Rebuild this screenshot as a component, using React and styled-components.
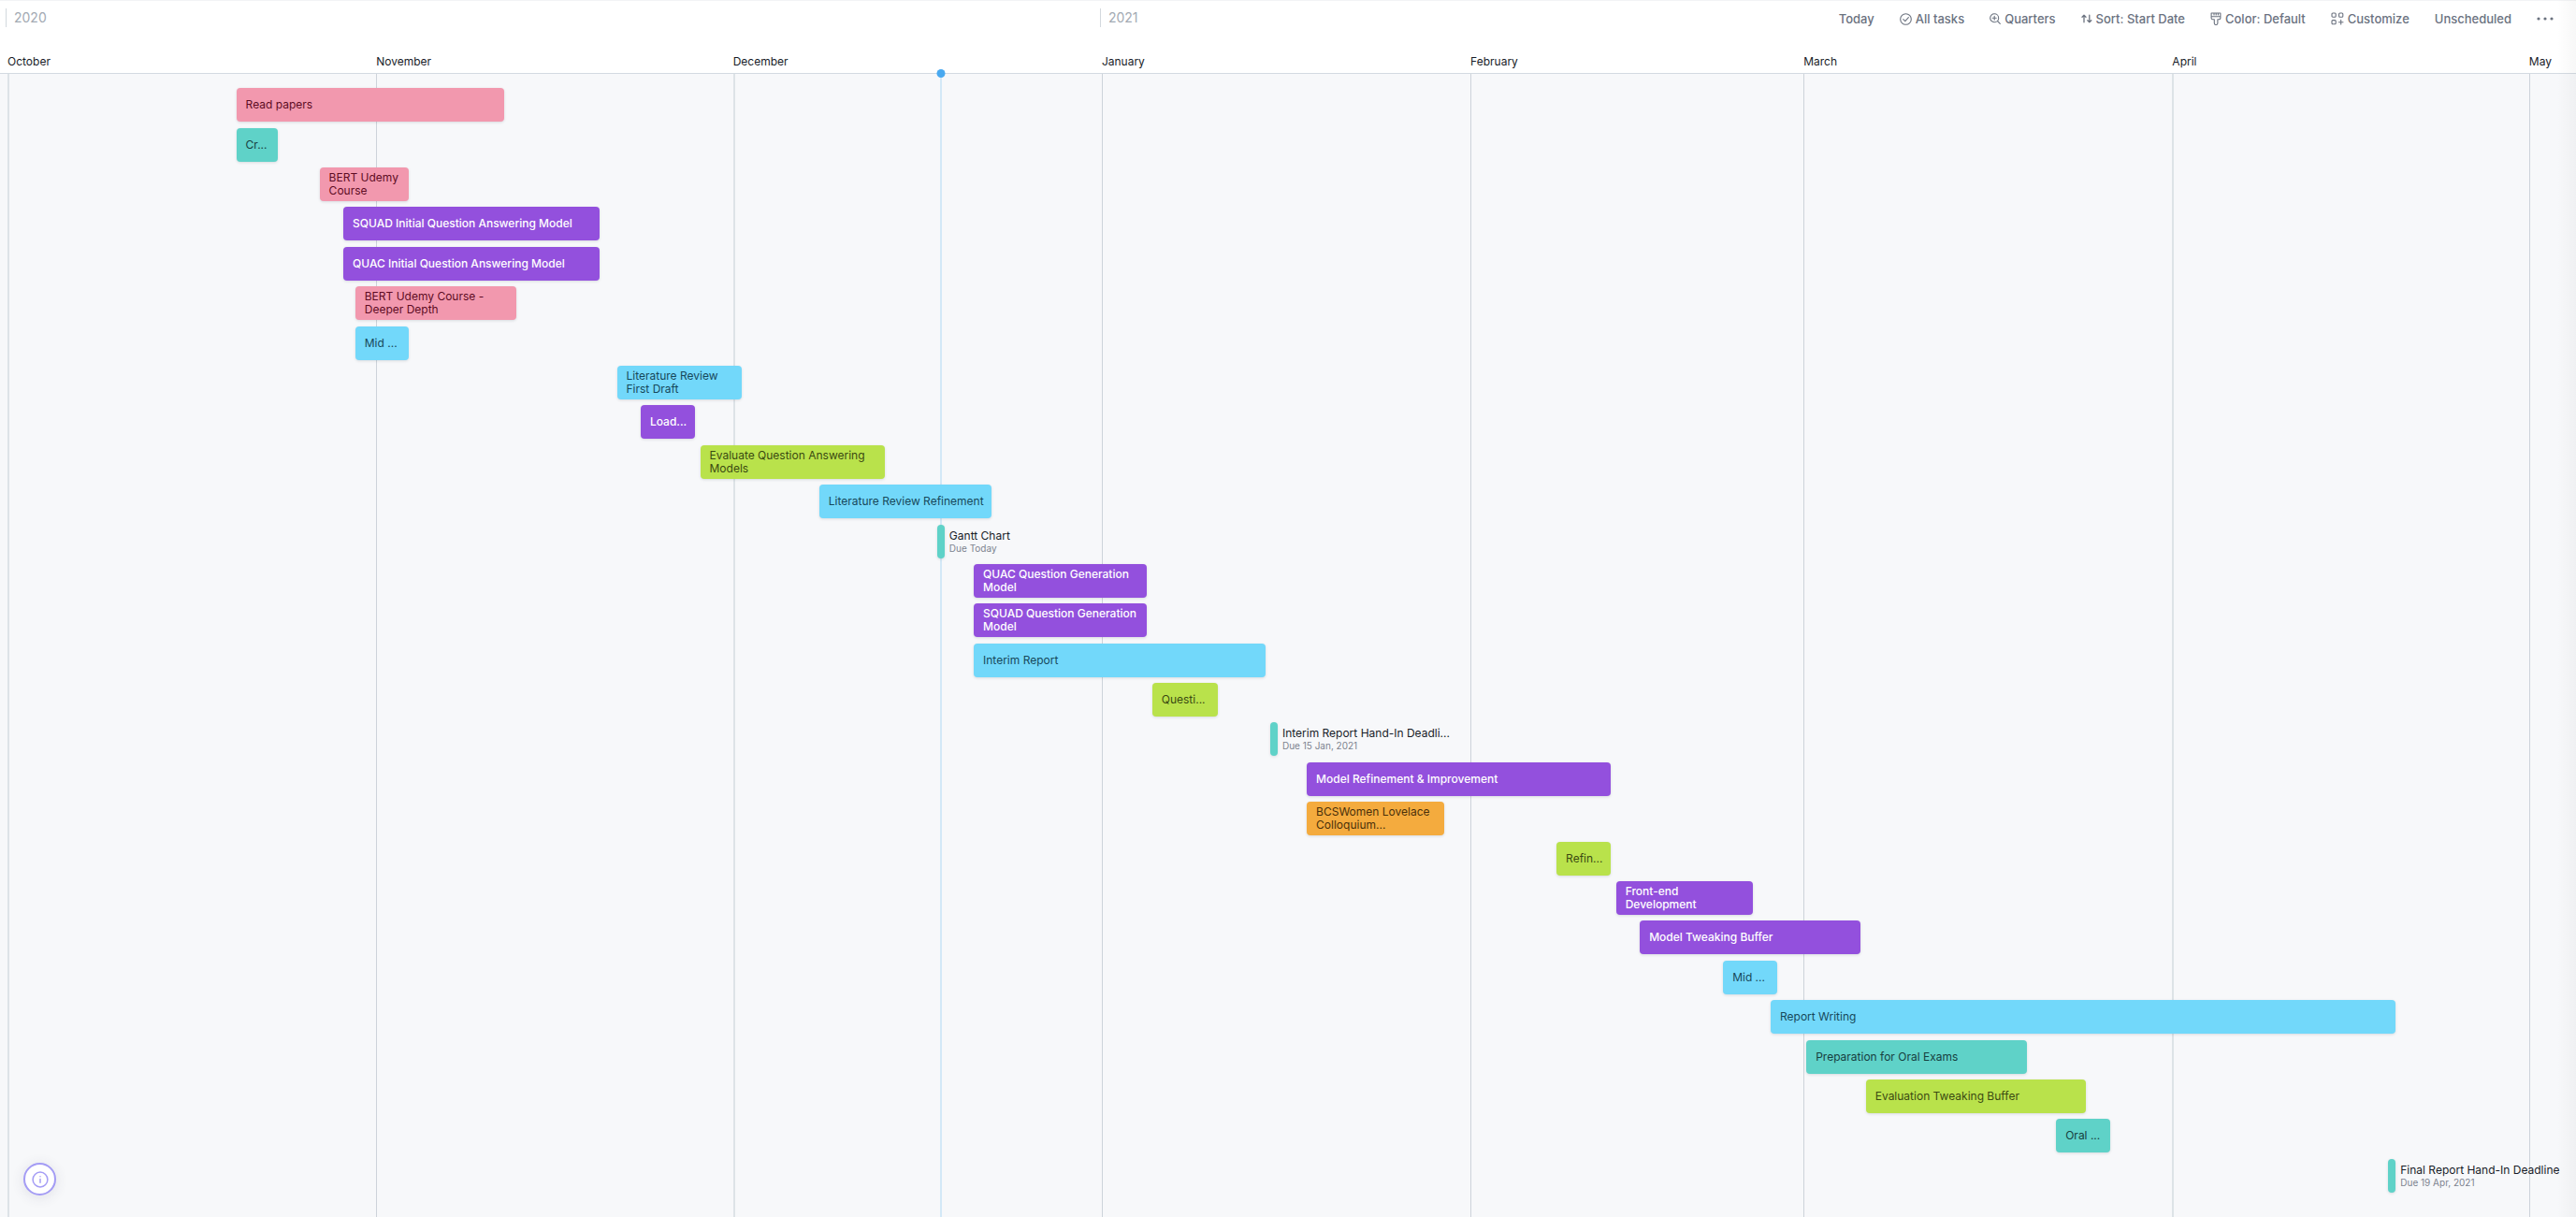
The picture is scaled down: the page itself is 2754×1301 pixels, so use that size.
import React from "react";
import styled, { createGlobalStyle, css } from "styled-components";

const GlobalStyle = createGlobalStyle`
  *, *::before, *::after { box-sizing: border-box; }
  body {
    margin: 0;
    background: #f7f8fa;
    color: #181c28;
    font-family: Inter, "Liberation Sans", sans-serif;
    font-size: 12px;
    line-height: 15px;
  }
`;

const DAYS = 215;

const palette = {
  pink: { fill: "#f298ae", text: "#5e0c24" },
  teal: { fill: "#5fd2c8", text: "#17403f" },
  purple: { fill: "#9350dd", text: "#ffffff", weight: 500 },
  blue: { fill: "#72d8fa", text: "#17485a" },
  green: { fill: "#b9e24b", text: "#3b4a12" },
  orange: { fill: "#f4ab3e", text: "#4a300a" },
};

const years = [
  { label: "2020", start: 0, end: 92 },
  { label: "2021", start: 92, end: 150 },
];

const months = [
  { label: "October", start: 0, end: 31, wide: true },
  { label: "November", start: 31, end: 61 },
  { label: "December", start: 61, end: 92, wide: true },
  { label: "January", start: 92, end: 123 },
  { label: "February", start: 123, end: 151 },
  { label: "March", start: 151, end: 182 },
  { label: "April", start: 182, end: 212, wide: true },
  { label: "May", start: 212, end: 215 },
];

const TODAY = 78;

const tasks = [
  { name: "Read papers", start: 19, end: 42, color: "pink" },
  { name: "Cr...", start: 19, end: 23, color: "teal" },
  { name: "BERT Udemy Course", start: 26, end: 34, color: "pink" },
  { name: "SQUAD Initial Question Answering Model", start: 28, end: 50, color: "purple" },
  { name: "QUAC Initial Question Answering Model", start: 28, end: 50, color: "purple" },
  { name: "BERT Udemy Course - Deeper Depth", start: 29, end: 43, color: "pink" },
  { name: "Mid ...", start: 29, end: 34, color: "blue" },
  { name: "Literature Review First Draft", start: 51, end: 62, color: "blue" },
  { name: "Load...", start: 53, end: 58, color: "purple" },
  { name: "Evaluate Question Answering Models", start: 58, end: 74, color: "green" },
  { name: "Literature Review Refinement", start: 68, end: 83, color: "blue" },
  { name: "Gantt Chart", start: 78, due: "Due Today" },
  { name: "QUAC Question Generation Model", start: 81, end: 96, color: "purple" },
  { name: "SQUAD Question Generation Model", start: 81, end: 96, color: "purple" },
  { name: "Interim Report", start: 81, end: 106, color: "blue" },
  { name: "Questi...", start: 96, end: 102, color: "green" },
  { name: "Interim Report Hand-In Deadli...", start: 106, due: "Due 15 Jan, 2021" },
  { name: "Model Refinement & Improvement", start: 109, end: 135, color: "purple" },
  { name: "BCSWomen Lovelace Colloquium...", start: 109, end: 121, color: "orange" },
  { name: "Refin...", start: 130, end: 135, color: "green" },
  { name: "Front-end Development", start: 135, end: 147, color: "purple" },
  { name: "Model Tweaking Buffer", start: 137, end: 156, color: "purple" },
  { name: "Mid ...", start: 144, end: 149, color: "blue" },
  { name: "Report Writing", start: 148, end: 201, color: "blue" },
  { name: "Preparation for Oral Exams", start: 151, end: 170, color: "teal" },
  { name: "Evaluation Tweaking Buffer", start: 156, end: 175, color: "green" },
  { name: "Oral ...", start: 172, end: 177, color: "teal" },
  { name: "Final Report Hand-In Deadline", start: 200, due: "Due 19 Apr, 2021" },
];

const Page = styled.div`
  position: relative;
  display: flex;
  flex-direction: column;
  min-height: 100vh;
  overflow: hidden;

  &::after {
    content: "";
    position: absolute;
    inset: 0 0 0 auto;
    width: 20px;
    background: linear-gradient(to left, rgba(0, 0, 0, 0.03), rgba(0, 0, 0, 0));
    pointer-events: none;
  }
`;

const dayColumns = css`
  display: grid;
  grid-template-columns: repeat(${DAYS}, minmax(0, 1fr));
  padding-left: 8px;
  padding-right: 12px;
`;

const Header = styled.header`
  display: flex;
  flex-direction: column;
  justify-content: space-between;
  height: 79px;
  background: #ffffff;
  border-top: 1px solid #f2f3f5;
  border-bottom: 1px solid #d3dae1;
`;

const TopRow = styled.div`
  display: grid;
`;

const YearScale = styled.div`
  ${dayColumns}
  grid-area: 1 / 1;
  padding-top: 8px;
`;

const Year = styled.div`
  grid-row: 1;
  grid-column: ${(p) => p.$start + 1} / ${(p) => p.$end + 1};
  margin-left: -2px;
  padding-left: 8px;
  border-left: 1px solid #d3d8de;
  color: #a3aab3;
  font-size: 14px;
  line-height: 20px;
  justify-self: start;
  align-self: start;
`;

const Toolbar = styled.nav`
  grid-area: 1 / 1;
  justify-self: end;
  display: flex;
  align-items: center;
  gap: 27px;
  padding-top: 8px;
  padding-right: 24px;
`;

const ToolButton = styled.button`
  display: flex;
  align-items: center;
  gap: 4px;
  height: 22px;
  padding: 0;
  border: 0;
  background: none;
  color: #6b727f;
  font: 500 13px/22px Inter, "Liberation Sans", sans-serif;
  white-space: nowrap;
  cursor: pointer;
`;

const Icon = styled.svg`
  flex: none;
  display: block;
  fill: none;
  stroke: currentColor;
  stroke-linecap: round;
  stroke-linejoin: round;
`;

const MonthScale = styled.div`
  ${dayColumns}
  padding-bottom: 5px;
`;

const Month = styled.div`
  grid-row: 1;
  grid-column: ${(p) => p.$start + 1} / ${(p) => p.$end + 1};
  white-space: nowrap;
`;

const Chart = styled.main`
  flex: 1;
  display: grid;
`;

const Lines = styled.div`
  ${dayColumns}
  grid-area: 1 / 1;
`;

const MonthLine = styled.div`
  grid-row: 1;
  grid-column: ${(p) => p.$start + 1} / ${(p) => p.$end + 1};
  border-left: ${(p) => (p.$wide ? "2px solid #dde3e7" : "1px solid #cdd3da")};
`;

const TodayLine = styled.div`
  position: relative;
  grid-row: 1;
  grid-column: ${TODAY + 1};
  justify-self: center;
  width: 2px;
  background: #d3e8f7;

  &::before {
    content: "";
    position: absolute;
    top: -5px;
    left: 50%;
    width: 9px;
    height: 9px;
    transform: translateX(-50%);
    border-radius: 50%;
    background: #49a9f0;
  }
`;

const TaskGrid = styled.div`
  ${dayColumns}
  grid-area: 1 / 1;
  z-index: 1;
  grid-template-rows: repeat(${tasks.length}, minmax(42px, 1fr));
  align-items: center;
  padding-top: 12px;
  padding-bottom: 23px;
`;

const Bar = styled.div`
  grid-row: ${(p) => p.$row};
  grid-column: ${(p) => p.$start + 1} / ${(p) => p.$end + 1};
  display: flex;
  align-items: center;
  height: 36px;
  margin: 0 3px;
  padding: 0 7px 0 10px;
  border-radius: 4px;
  background: ${(p) => palette[p.$color].fill};
  color: ${(p) => palette[p.$color].text};
  font-weight: ${(p) => palette[p.$color].weight || 400};
  line-height: 14px;
  box-shadow: 0 1px 3px rgba(30, 40, 60, 0.14);
`;

const Milestone = styled.div`
  grid-row: ${(p) => p.$row};
  grid-column: ${(p) => p.$start + 1} / span 15;
  display: flex;
  align-items: center;
  gap: 5px;
  padding-left: 2px;
  white-space: nowrap;
`;

const Marker = styled.span`
  flex: none;
  width: 8px;
  height: 36px;
  border-radius: 4px;
  background: #5fd2c8;
  box-shadow: 0 1px 3px rgba(30, 40, 60, 0.14);
`;

const MilestoneText = styled.div`
  line-height: 14px;
`;

const Due = styled.div`
  color: #7d838f;
  font-size: 10px;
  line-height: 12px;
`;

const InfoButton = styled.button`
  position: absolute;
  left: 25px;
  bottom: 23px;
  z-index: 2;
  display: grid;
  place-items: center;
  width: 35px;
  height: 35px;
  padding: 0;
  border: 2px solid #a49cf5;
  border-radius: 50%;
  background: #ffffff;
  color: #a49cf5;
  box-shadow: 0 2px 14px rgba(60, 60, 90, 0.12);
  cursor: pointer;
`;

const CheckCircle = () => (
  <Icon width="13" height="13" viewBox="0 0 13 13" strokeWidth="1.1">
    <circle cx="6.5" cy="6.5" r="5.8" />
    <path d="M3.8 6.7 5.8 8.6 9.4 4.7" />
  </Icon>
);

const ZoomIn = () => (
  <Icon width="12" height="12" viewBox="0 0 12 12" strokeWidth="1.1">
    <circle cx="5.2" cy="5.2" r="4.5" />
    <path d="M8.5 8.5 11.3 11.3M5.2 3.2v4M3.2 5.2h4" />
  </Icon>
);

const SortArrows = () => (
  <Icon width="12" height="10" viewBox="0 0 12 10" strokeWidth="1.3">
    <path d="M3 8.8V1.2M1 3.2l2-2 2 2M8.8 1.2v7.6M6.8 6.8l2 2 2-2" />
  </Icon>
);

const Brush = () => (
  <Icon width="12" height="14" viewBox="0 0 12 14" strokeWidth="1.1">
    <path d="M1.1 1h9.8v5.2a1.5 1.5 0 0 1-1.5 1.5H7.9v4a1.6 1.6 0 0 1-3.6 0v-4H2.6a1.5 1.5 0 0 1-1.5-1.5ZM1.1 4.8h9.8M4 1v2M6.2 1v2M8.4 1v2" />
  </Icon>
);

const Customize = () => (
  <Icon width="14" height="14" viewBox="0 0 14 14" strokeWidth="1.1">
    <rect x="1" y="1" width="4.2" height="4.2" rx="1" />
    <rect x="8.6" y="1" width="4.2" height="4.2" rx="1" />
    <rect x="1" y="8.6" width="4.2" height="4.2" rx="1" />
    <path d="M10.7 8.4v4.6M8.4 10.7H13" />
  </Icon>
);

const Dots = () => (
  <Icon width="18" height="4" viewBox="0 0 18 4">
    <g fill="currentColor" stroke="none">
      <circle cx="2" cy="2" r="1.6" />
      <circle cx="9" cy="2" r="1.6" />
      <circle cx="16" cy="2" r="1.6" />
    </g>
  </Icon>
);

const Info = () => (
  <Icon width="18" height="18" viewBox="0 0 18 18" strokeWidth="1.5">
    <circle cx="9" cy="9" r="7.9" />
    <path d="M9 8.6v3.6M9 5.7v.1" />
  </Icon>
);

export default function App() {
  return (
    <Page>
      <GlobalStyle />
      <Header>
        <TopRow>
          <YearScale>
            {years.map((y) => (
              <Year key={y.label} $start={y.start} $end={y.end}>{y.label}</Year>
            ))}
          </YearScale>
          <Toolbar aria-label="Timeline options">
            <ToolButton type="button">Today</ToolButton>
            <ToolButton type="button"><CheckCircle />All tasks</ToolButton>
            <ToolButton type="button"><ZoomIn />Quarters</ToolButton>
            <ToolButton type="button"><SortArrows />Sort: Start Date</ToolButton>
            <ToolButton type="button"><Brush />Color: Default</ToolButton>
            <ToolButton type="button"><Customize />Customize</ToolButton>
            <ToolButton type="button">Unscheduled</ToolButton>
            <ToolButton type="button" aria-label="More options"><Dots /></ToolButton>
          </Toolbar>
        </TopRow>
        <MonthScale>
          {months.map((m) => (
            <Month key={m.label} $start={m.start} $end={m.end}>{m.label}</Month>
          ))}
        </MonthScale>
      </Header>
      <Chart>
        <Lines>
          {months.map((m) => (
            <MonthLine key={m.label} $start={m.start} $end={m.end} $wide={m.wide} />
          ))}
          <TodayLine />
        </Lines>
        <TaskGrid>
          {tasks.map((t, i) =>
            t.due ? (
              <Milestone key={i} $row={i + 1} $start={t.start}>
                <Marker />
                <MilestoneText>
                  {t.name}
                  <Due>{t.due}</Due>
                </MilestoneText>
              </Milestone>
            ) : (
              <Bar key={i} $row={i + 1} $start={t.start} $end={t.end} $color={t.color}>
                {t.name}
              </Bar>
            )
          )}
        </TaskGrid>
      </Chart>
      <InfoButton type="button" aria-label="Information"><Info /></InfoButton>
    </Page>
  );
}
